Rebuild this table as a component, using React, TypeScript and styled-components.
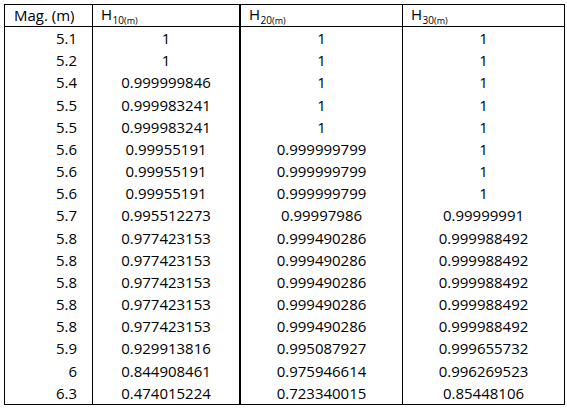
import React from "react";
import styled, { createGlobalStyle } from "styled-components";

type Row = { mag: string; h10: string; h20: string; h30: string };

const rows: Row[] = [
  { mag: "5.1", h10: "1", h20: "1", h30: "1" },
  { mag: "5.2", h10: "1", h20: "1", h30: "1" },
  { mag: "5.4", h10: "0.999999846", h20: "1", h30: "1" },
  { mag: "5.5", h10: "0.999983241", h20: "1", h30: "1" },
  { mag: "5.5", h10: "0.999983241", h20: "1", h30: "1" },
  { mag: "5.6", h10: "0.99955191", h20: "0.999999799", h30: "1" },
  { mag: "5.6", h10: "0.99955191", h20: "0.999999799", h30: "1" },
  { mag: "5.6", h10: "0.99955191", h20: "0.999999799", h30: "1" },
  { mag: "5.7", h10: "0.995512273", h20: "0.99997986", h30: "0.99999991" },
  { mag: "5.8", h10: "0.977423153", h20: "0.999490286", h30: "0.999988492" },
  { mag: "5.8", h10: "0.977423153", h20: "0.999490286", h30: "0.999988492" },
  { mag: "5.8", h10: "0.977423153", h20: "0.999490286", h30: "0.999988492" },
  { mag: "5.8", h10: "0.977423153", h20: "0.999490286", h30: "0.999988492" },
  { mag: "5.8", h10: "0.977423153", h20: "0.999490286", h30: "0.999988492" },
  { mag: "5.9", h10: "0.929913816", h20: "0.995087927", h30: "0.999655732" },
  { mag: "6", h10: "0.844908461", h20: "0.975946614", h30: "0.996269523" },
  { mag: "6.3", h10: "0.474015224", h20: "0.723340015", h30: "0.85448106" },
];

// column widths include each cell's right border
const widths = [88, 148, 162, 161];

const GlobalStyle = createGlobalStyle`
  html, body {
    margin: 0;
    background: #fff;
  }
  body {
    font-family: "Open Sans", "Liberation Sans", sans-serif;
    color: #000;
  }
`;

const Page = styled.div`
  padding: 4px;
`;

const Table = styled.table`
  border-collapse: separate;
  border-spacing: 0;
  table-layout: fixed;
  width: 561px;
  border: 1px solid #000;
  font-size: 15px;
`;

const HeadCell = styled.th<{ $wide?: boolean; $last?: boolean; $pad?: number }>`
  height: 19px;
  padding: 0 0 0 ${(p) => p.$pad ?? 8}px;
  text-align: left;
  font-weight: 400;
  line-height: 19px;
  white-space: nowrap;
  border-bottom: 1px solid #000;
  border-right: ${(p) => (p.$last ? "none" : `${p.$wide ? 2 : 1}px solid #000`)};
`;

const Cell = styled.td<{ $right?: boolean; $wide?: boolean; $last?: boolean }>`
  height: 22.18px;
  padding: ${(p) => (p.$right ? "0 15px 0 0" : "0")};
  text-align: ${(p) => (p.$right ? "right" : "center")};
  line-height: 20px;
  white-space: nowrap;
  border-right: ${(p) => (p.$last ? "none" : `${p.$wide ? 2 : 1}px solid #000`)};
`;

const Sub = styled.span`
  font-size: 10px;
  position: relative;
  top: 4px;
  margin-left: 0.5px;
`;

const Unit = styled.span`
  font-size: 9px;
`;

const H: React.FC<{ n: string }> = ({ n }) => (
  <>
    H
    <Sub>
      {n}
      <Unit>(m)</Unit>
    </Sub>
  </>
);

const App: React.FC = () => (
  <Page>
    <GlobalStyle />
    <Table>
      <colgroup>
        {widths.map((w, i) => (
          <col key={i} style={{ width: w }} />
        ))}
      </colgroup>
      <thead>
        <tr>
          <HeadCell $pad={9}>Mag. (m)</HeadCell>
          <HeadCell $wide>
            <H n="10" />
          </HeadCell>
          <HeadCell>
            <H n="20" />
          </HeadCell>
          <HeadCell $last>
            <H n="30" />
          </HeadCell>
        </tr>
      </thead>
      <tbody>
        {rows.map((r, i) => (
          <tr key={i}>
            <Cell $right>{r.mag}</Cell>
            <Cell $wide>{r.h10}</Cell>
            <Cell>{r.h20}</Cell>
            <Cell $last>{r.h30}</Cell>
          </tr>
        ))}
      </tbody>
    </Table>
  </Page>
);

export default App;
